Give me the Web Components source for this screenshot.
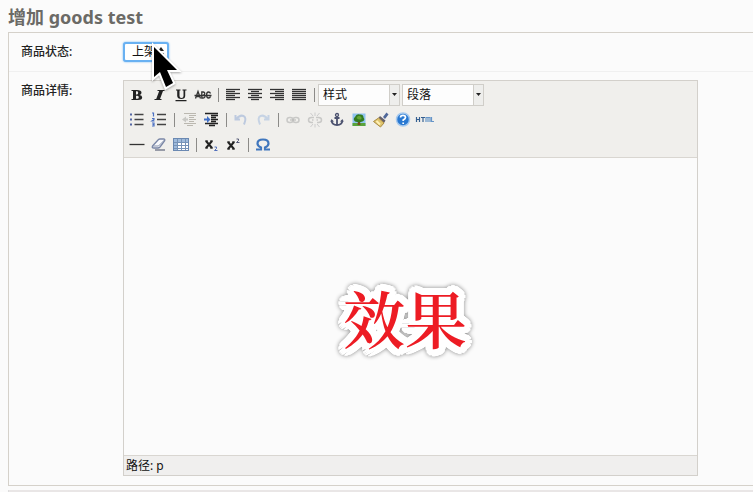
<!DOCTYPE html>
<html lang="zh-CN">
<head>
<meta charset="utf-8">
<meta name="viewport" content="width=device-width, initial-scale=1">
<title>增加 goods test</title>
<style>
    body{margin: 0; background: #fbfbfb; color: #222222; font-family: "Noto Sans", "Noto Sans CJK SC", sans-serif; font-size: 12px;}
</style>
</head>
<body>
<goods-page>
    <span slot="title">增加 goods test</span>
    <form-row label="商品状态:"><status-select></status-select></form-row>
    <form-row label="商品详情:"><rich-editor></rich-editor></form-row>
</goods-page>
<mouse-pointer></mouse-pointer>
<caption-text>效果</caption-text>

<script>
class GoodsPage extends HTMLElement {
    constructor() {
        super();
        const shadowRoot = this.attachShadow({ mode: 'open' });
        shadowRoot.innerHTML = `
            <style>
                :host{display: flex; flex-direction: column; box-sizing: border-box; min-height: 100vh; padding-left: 8px;}
                h1{margin: 0; height: 32px; line-height: 34px; font-size: 18px; font-weight: 700; color: #6b6a66;}
                .module{border: 1px solid #d5d1ca; border-right: 0; padding-bottom: 9px;}
                .next{flex: 1; margin-top: 4px; border-left: 1px solid #dddddd; background: #e9e6e6;}
            </style>
            <h1><slot name="title"></slot></h1>
            <div class="module"><slot></slot></div>
            <div class="next"></div>
        `;
    }
}
customElements.define('goods-page', GoodsPage);

class FormRow extends HTMLElement {
    constructor() {
        super();
        const shadowRoot = this.attachShadow({ mode: 'open' });
        shadowRoot.innerHTML = `
            <style>
                :host{display: flex; align-items: flex-start; padding: 8px 55px 0 12px;}
                :host(:first-of-type){padding-bottom: 8px; border-bottom: 1px solid #f0f0f0;}
                label{flex: 0 0 102px; line-height: 22px; font-weight: 500;}
                .field{flex: 1; min-width: 0;}
            </style>
            <label></label>
            <div class="field"><slot></slot></div>
        `;
        this.label = shadowRoot.querySelector('label');
    }
    connectedCallback() {
        this.label.textContent = this.getAttribute('label');
        this.label.addEventListener('click', () => this.firstElementChild.focus());
    }
}
customElements.define('form-row', FormRow);

class StatusSelect extends HTMLElement {
    constructor() {
        super();
        const shadowRoot = this.attachShadow({ mode: 'open', delegatesFocus: true });
        shadowRoot.innerHTML = `
            <style>
                :host{display: flex;}
                .box{display: grid; align-items: center; margin-top: 1px; border: 2px solid #69b1f2; border-radius: 3px; background: #ffffff; box-shadow: 0 0 2px #69b1f2;}
                select, svg{grid-area: 1 / 1;}
                select{appearance: none; border: 0; outline: 0; background: none; width: 42px; height: 16px; padding: 0 0 0 7px; font: inherit; line-height: 16px; color: #111111;}
                svg{justify-self: end; margin-right: 3px; pointer-events: none;}
            </style>
            <div class="box">
                <select aria-label="商品状态"><option>上架</option><option>下架</option></select>
                <svg width="6" height="12" viewBox="0 0 6 12"><path d="M0 5L3 1L6 5ZM0 7L3 11L6 7Z" fill="#222"/></svg>
            </div>
        `;
    }
}
customElements.define('status-select', StatusSelect);

/* lines for text blocks: [x1, x2] per line */
const bars = (rows) => rows.map((r, i) => `<path d="M${r[0]} ${4 + i * 2}.5H${r[1]}" stroke="#333" stroke-width="1.3"/>`).join('');

const icons = {
    bold: ['粗体', '<path d="M4.500 5H10Q14.500 5 14.500 7.700Q14.500 9.400 12.500 10Q15.200 10.400 15.200 12.500Q15.200 15 11 15H4.500V14H6V6H4.500ZM9 6.200V9.500H10Q11.200 9.500 11.200 7.800T10 6.200ZM9 10.700V13.800H10.200Q11.800 13.800 11.800 12.200T10.200 10.700Z" fill="#222" fill-rule="evenodd"/>'],
    italic: ['斜体', '<path d="M8.500 5H15.500V6H14L11 14H12.500V15H5.500V14H7.200L10.200 6H8.500Z" fill="#222"/>'],
    underline: ['下划线', '<path d="M5 4.500H9.500V5.500H8.500V11Q8.500 13 10.500 13T12.500 11V5.500H11.500V4.500H15.500V5.500H14.200V11Q14.200 14 10.300 14T6.200 11V5.500H5ZM4.500 15H15.500V16.200H4.500Z" fill="#222"/>'],
    strike: ['删除线', '<path d="M2.500 13.500L5 6.500L7.500 13.500M3.500 11.500H6.500M8.800 7V13H10.200Q12 13 12 11.500T10.200 10Q11.800 10 11.800 8.500T10.200 7ZM17.500 8.500Q17 7 15.500 7Q13.600 7 13.600 10T15.500 13Q17 13 17.500 11.500M1.500 10.500H18.500" fill="none" stroke="#333" stroke-width="1.300"/>'],
    left: ['左对齐', bars([[3, 17], [3, 12], [3, 17], [3, 12], [3, 17], [3, 12]])],
    center: ['居中', bars([[3, 17], [6, 14], [3, 17], [6, 14], [3, 17], [6, 14]])],
    right: ['右对齐', bars([[3, 17], [8, 17], [3, 17], [8, 17], [3, 17], [8, 17]])],
    full: ['两端对齐', bars([[3, 17], [3, 17], [3, 17], [3, 17], [3, 17], [3, 17]])],
    bullets: ['项目列表', '<path d="M7.500 4.500H16.500M7.500 9.500H16.500M7.500 14.500H16.500" stroke="#444" stroke-width="1.300"/><path d="M3 3.500H5V5.500H3ZM3 8.500H5V10.500H3ZM3 13.500H5V15.500H3Z" fill="#5366a3"/>'],
    numbers: ['编号列表', '<path d="M8 4.500H17M8 9.500H17M8 14.500H17" stroke="#444" stroke-width="1.300"/><path d="M3 3H4.500V6.500M3 8.500H5V9.500L3 11H5.500M3 13H5V16H3M3.500 14.500H5" fill="none" stroke="#4a70c4" stroke-width="1.200"/>'],
    outdent: ['减少缩进', '<path d="M5 3.500H17M10 5.500H17M10 7.500H15M10 9.500H17M10 11.500H15M5 13.500H17M8 15.500H14" stroke="#bbb8b0"/><path d="M3 9.500L7 6.500V8.500H9V10.500H7V12.500Z" fill="#c8c8c4"/>'],
    indent: ['增加缩进', '<path d="M4 3.500H17M10 5.500H17M10 7.500H15M10 9.500H17M10 11.500H15M4 13.500H17M8 15.500H14" stroke="#222" stroke-width="1.400"/><path d="M9.500 9.500L6 6V8.500H3V10.500H6V13Z" fill="#416fc6"/>'],
    undo: ['撤销', '<path d="M4.500 5V9.500H9M5.500 9Q9 4.500 12.500 6T13 14.500" fill="none" stroke="#bdcadf" stroke-width="2"/>'],
    redo: ['重做', '<path d="M15.500 5V9.500H11M14.500 9Q11 4.500 7.500 6T7 14.500" fill="none" stroke="#c6d3e4" stroke-width="2"/>'],
    link: ['插入链接', '<rect x="4" y="7.500" width="6" height="5" rx="2.500" fill="none" stroke="#c9c9c7" stroke-width="1.500"/><rect x="10" y="7.500" width="6" height="5" rx="2.500" fill="none" stroke="#c9c9c7" stroke-width="1.500"/><path d="M7 10H13" stroke="#b5b5b3"/>'],
    unlink: ['取消链接', '<path d="M9 7.500H6.500Q3.500 7.500 3.500 10T6.500 12.500H8M11 7.500H13.500Q16.500 7.500 16.500 10T13.500 12.500H12M7 10H8.500M11.500 10H13" fill="none" stroke="#c9c9c7" stroke-width="1.500"/><path d="M10 2.500V6M5.500 3L8 6M14.500 3L12 6M10 14V17.500M8 14L5.500 17M12 14L14.500 17" stroke="#ccc"/>'],
    anchor: ['锚点', '<circle cx="10" cy="5" r="1.500" fill="none" stroke="#4c526f" stroke-width="1.300"/><path d="M10 6.500V15.500M7.500 8H12.500M4.500 10.500Q5 15 10 15T15.500 10.500" fill="none" stroke="#4c526f" stroke-width="1.800"/><path d="M3.500 12L4.500 9L7 11.500ZM16.500 12L15.500 9L13 11.500Z" fill="#4c526f"/>'],
    image: ['图片', '<rect x="3.500" y="3.500" width="13" height="12.500" fill="#8fc3ef"/><path d="M3.500 13H16.500V16H3.500Z" fill="#59a33b"/><path d="M9 11H11L11.500 15H8.500Z" fill="#754b23"/><path d="M6 11.500Q3.500 9 6 7Q7.500 3.500 10.500 4.500Q14.500 4 14.500 7.500Q16.500 10 13.500 11.500Q10 13 6 11.500Z" fill="#347b20"/><path d="M7.500 8Q9 5 11 6T12.500 9Q10 10.500 7.500 8Z" fill="#65a735"/>'],
    cleanup: ['清除格式', '<path d="M12 7L15.500 2.500L17.500 4.500L14 9Z" fill="#4f6799"/><path d="M9 6L14.500 10.500L13 13L7.500 8Z" fill="#66606a"/><path d="M7.500 8L13 13L9.500 17L2.500 11.500Z" fill="#dfc46d" stroke="#aa8c45"/><path d="M5.500 11L9 14.500" stroke="#fff1b5" stroke-width="2"/>'],
    help: ['帮助', '<circle cx="10" cy="9.500" r="6.500" fill="#2878d1" stroke="#a6c9ee" stroke-width="1.500"/><path d="M7.500 7.500Q7.500 5.300 10 5.300T12.500 7.500Q12.500 8.700 10.200 10V11M10.200 12.500V14" fill="none" stroke="#fff" stroke-width="1.700"/>'],
    html: ['HTML', '<path d="M1.500 7V12M4.500 7V12M1.500 9.500H4.500M6 7.500H10M8 7V12" fill="none" stroke="#355f90" stroke-width="1.200"/><path d="M11 12V7.500H15V12M13 7.500V12M16.500 7V11.500H19" fill="none" stroke="#6695c8" stroke-width="1.200"/>'],
    hr: ['水平线', '<path d="M2.500 9.500H17.500" stroke="#333" stroke-width="1.300"/>'],
    eraser: ['橡皮擦', '<path d="M3.500 11L9.500 4.500Q10 4 11 4H14.500Q16.500 4 15.500 6L11 12Q10 13 9 13H5Q2.500 13 3.500 11Z" fill="#f8f9fc" stroke="#7885a5" stroke-width="1.300"/><path d="M4 11H9.500L15.500 5" fill="none" stroke="#8793ac"/><path d="M6 15H16" stroke="#666f82" stroke-width="1.300"/>'],
    table: ['表格', '<rect x="2.500" y="3.500" width="15" height="12" fill="#fff" stroke="#6b89b2"/><path d="M3 4H17V7H3ZM3 7H6V15H3Z" fill="#9fbbdc"/><path d="M3 7.500H17M3 10.500H17M3 13.500H17M6.500 4V15M10.500 4V15M14.500 4V15" stroke="#7793b7"/>'],
    sub: ['下标', '<path d="M5 6L11 13M11 6L5 13" stroke="#222" stroke-width="2"/><path d="M4 6H7M9 6H12M4 13H7M9 13H12" stroke="#222"/><path d="M13.500 12H15.500V13.500L13.500 15.500H16.500" fill="none" stroke="#5370bc"/>'],
    sup: ['上标', '<path d="M5 7L11 14M11 7L5 14" stroke="#222" stroke-width="2"/><path d="M4 7H7M9 7H12M4 14H7M9 14H12" stroke="#222"/><path d="M13.500 4H15.500V5.500L13.500 7.500H16.500" fill="none" stroke="#555a77"/>'],
    omega: ['特殊字符', '<path d="M3 14.500H8V12.500Q4.500 11 4.500 8.500Q4.500 4.500 10 4.500T15.500 8.500Q15.500 11 12 12.500V14.500H17" fill="none" stroke="#3f76bd" stroke-width="2.200"/>']
};

const rows = [
    'bold italic underline strike | left center right full | styles formats',
    'bullets numbers | outdent indent | undo redo | link unlink anchor image cleanup help html',
    'hr eraser table | sub sup | omega'
];
const lists = { styles: '样式', formats: '段落' };

class EditorButton extends HTMLElement {
    constructor() {
        super();
        this.attachShadow({ mode: 'open' });
    }
    connectedCallback() {
        const icon = icons[this.getAttribute('icon')];
        this.shadowRoot.innerHTML = `
            <style>
                :host{display: block;}
                button{display: block; width: 22px; height: 22px; padding: 1px; border: 0; background: none;}
                button:hover{background: #dfe4ee;}
                svg{display: block;}
            </style>
            <button type="button" aria-label="${icon[0]}"><svg width="20" height="20" viewBox="0 0 20 20">${icon[1]}</svg></button>
        `;
    }
}
customElements.define('editor-button', EditorButton);

class EditorList extends HTMLElement {
    constructor() {
        super();
        this.attachShadow({ mode: 'open' });
    }
    connectedCallback() {
        const text = this.getAttribute('text');
        this.shadowRoot.innerHTML = `
            <style>
                :host{display: grid; margin-right: 2px; border: 1px solid #d0cec9; background: #fdfdfd;}
                select, .arrow{grid-area: 1 / 1;}
                select{appearance: none; width: 80px; height: 20px; padding: 0 12px 0 4px; border: 0; border-radius: 0; background: none; font: inherit; line-height: 20px; color: #111111;}
                .arrow{justify-self: end; display: flex; align-items: center; justify-content: center; width: 9px; border-left: 1px solid #d0cec9; background: #eeeeec; pointer-events: none;}
            </style>
            <select aria-label="${text}"><option>${text}</option></select>
            <span class="arrow"><svg width="5" height="3" viewBox="0 0 5 3"><path d="M0 0H5L2.500 3Z" fill="#222"/></svg></span>
        `;
    }
}
customElements.define('editor-list', EditorList);

class RichEditor extends HTMLElement {
    constructor() {
        super();
        const shadowRoot = this.attachShadow({ mode: 'open', delegatesFocus: true });
        shadowRoot.innerHTML = `
            <style>
                :host{display: block; border: 1px solid #d3d0cb;}
                .toolbar{padding: 1px 2px 0; background: #f0efec; border-bottom: 1px solid #d9d6d1;}
                .row{display: flex; align-items: center; height: 25px;}
                .sep{width: 1px; height: 14px; margin: 0 3px 0 4px; background: #8c8b88;}
                textarea{display: block; box-sizing: border-box; width: 100%; height: 297px; padding: 8px; border: 0; outline: 0; resize: none; background: #fbfbfb; font: inherit;}
                .path{padding: 0 2px; border-top: 1px solid #d9d6d1; background: #f0efee; line-height: 19px; color: #111111;}
            </style>
            <div class="toolbar">${rows.map((row) => `<div class="row">${row.split(' ').map((name) => {
                if (name === '|') return '<span class="sep"></span>';
                if (lists[name]) return `<editor-list text="${lists[name]}"></editor-list>`;
                return `<editor-button icon="${name}"></editor-button>`;
            }).join('')}</div>`).join('')}</div>
            <textarea aria-label="商品详情"></textarea>
            <div class="path">路径: p</div>
        `;
    }
}
customElements.define('rich-editor', RichEditor);

class MousePointer extends HTMLElement {
    constructor() {
        super();
        const shadowRoot = this.attachShadow({ mode: 'open' });
        shadowRoot.innerHTML = `
            <style>
                :host{position: absolute; left: 148px; top: 40px; pointer-events: none;}
                svg{display: block; filter: drop-shadow(0 1px 1px #00000055);}
            </style>
            <svg width="36" height="54" viewBox="0 0 36 54"><path d="M6 7V37L12 32L18 47L25 43L19 30H29Z" fill="#000" stroke="#fff" stroke-width="4" paint-order="stroke"/></svg>
        `;
    }
}
customElements.define('mouse-pointer', MousePointer);

/* round white edge: copies of the text on a circle */
const ring = Array.from({ length: 32 }, (_, i) => {
    const a = i * Math.PI / 16;
    return `${Math.round(Math.cos(a) * 7)}px ${Math.round(Math.sin(a) * 7)}px 0 #ffffff`;
}).join(', ');

class CaptionText extends HTMLElement {
    constructor() {
        super();
        const shadowRoot = this.attachShadow({ mode: 'open' });
        shadowRoot.innerHTML = `
            <style>
                :host{position: absolute; left: 343px; top: 280px; font: 600 62px/76px "Noto Serif CJK SC", "Noto Sans CJK SC", serif; color: #ed1c24; pointer-events: none;}
                span{display: block; text-shadow: ${ring}, 0 0 6px #ffffff; filter: drop-shadow(0 0 2px #00000077);}
            </style>
            <span><slot></slot></span>
        `;
    }
}
customElements.define('caption-text', CaptionText);
</script>
</body>
</html>
